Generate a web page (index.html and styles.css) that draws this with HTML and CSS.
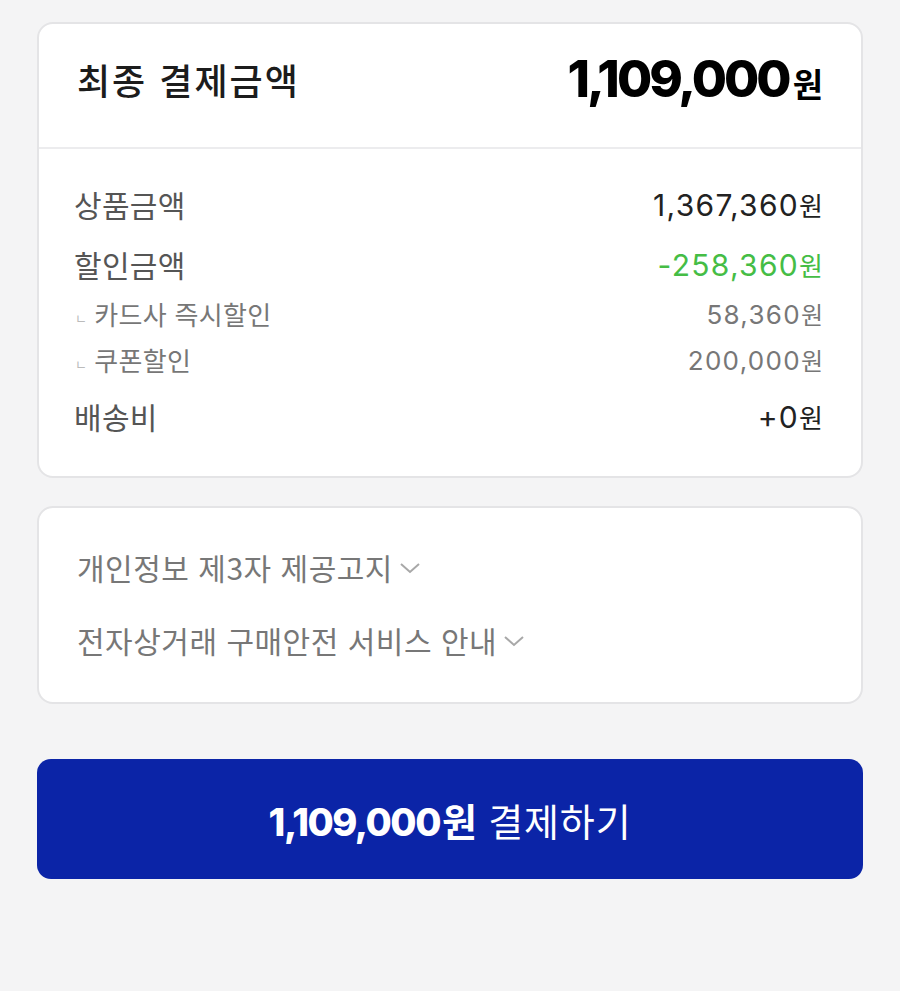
FILE: index.html
```html
<!DOCTYPE html>
<html lang="ko">
<head>
    <meta charset="UTF-8">
    <meta name="viewport" content="width=device-width, initial-scale=1.0">
    <title>결제하기</title>
    <link rel="stylesheet" href="styles.css">
</head>
<body>

<div class="page">
    <div class="card summary">
        <div class="summary-head">
            <span class="head-label">최종 결제금액</span>
            <span class="head-price">1,109,000<small>원</small></span>
        </div>
        <div class="summary-body">
            <div class="row">
                <span class="label">상품금액</span>
                <span class="value">1,367,360<small>원</small></span>
            </div>
            <div class="row">
                <span class="label">할인금액</span>
                <span class="value green">-258,360<small>원</small></span>
            </div>
            <div class="row sub">
                <span class="label"><i class="mark">ㄴ</i>카드사 즉시할인</span>
                <span class="value">58,360<small>원</small></span>
            </div>
            <div class="row sub">
                <span class="label"><i class="mark">ㄴ</i>쿠폰할인</span>
                <span class="value">200,000<small>원</small></span>
            </div>
            <div class="row last">
                <span class="label">배송비</span>
                <span class="value">+0<small>원</small></span>
            </div>
        </div>
    </div>

    <div class="card notice">
        <div class="notice-item">개인정보 제3자 제공고지
            <svg class="chev" width="22" height="12" viewBox="0 0 22 12"><path d="M2 2l9 8 9-8" fill="none" stroke="#a8a8a8" stroke-width="2"/></svg>
        </div>
        <div class="notice-item">전자상거래 구매안전 서비스 안내
            <svg class="chev" width="22" height="12" viewBox="0 0 22 12"><path d="M2 2l9 8 9-8" fill="none" stroke="#a8a8a8" stroke-width="2"/></svg>
        </div>
    </div>

    <button class="pay-btn"><b>1,109,000<span>원</span></b> 결제하기</button>
</div>

</body>
</html>
```

FILE: styles.css
```css
body {
    margin: 0;
    background-color: #f4f4f5;
    font-family: "Noto Sans CJK KR", "Noto Sans", sans-serif;
    color: #222;
}

.page {
    padding: 22px 37px 0 37px;
    display: flex;
    flex-direction: column;
}

.card {
    background-color: #fff;
    border: 2px solid #e4e4e6;
    border-radius: 16px;
}

.summary-head {
    height: 125px;
    padding: 0 38px 14px 38px;
    box-sizing: border-box;
    display: flex;
    justify-content: space-between;
    align-items: center;
    border-bottom: 2px solid #ececee;
}

.head-label {
    font-size: 36px;
    font-weight: 500;
    color: #1c1c1c;
    letter-spacing: 2px;
}

.head-price {
    font-family: "Inter", "Noto Sans CJK KR", sans-serif;
    font-size: 51px;
    font-weight: 800;
    color: #000;
    letter-spacing: -3px;
}

.head-price small {
    font-family: "Noto Sans CJK KR", sans-serif;
    font-size: 33px;
    font-weight: 700;
    letter-spacing: 0;
    margin-left: 4px;
}

.summary-body {
    padding: 35px 38px 40px 35px;
}

.row {
    display: flex;
    justify-content: space-between;
    align-items: center;
    height: 40px;
    margin-bottom: 20px;
}

.row .label {
    font-size: 30px;
    color: #555;
    letter-spacing: 0.3px;
}

.row .value {
    font-family: "Inter", "Noto Sans CJK KR", sans-serif;
    font-size: 30px;
    color: #222;
    letter-spacing: 1.3px;
}

.row small {
    font-family: "Noto Sans CJK KR", sans-serif;
    font-size: 26px;
    letter-spacing: 0;
}

.row .green {
    color: #45bd45;
}

.row.sub {
    height: 36px;
    margin-top: -9px;
    margin-bottom: 19px;
}

.row.sub .label {
    font-size: 26px;
    color: #777;
}

.row.sub .value {
    font-size: 26px;
    color: #777;
    letter-spacing: 1.3px;
}

.row.sub small {
    font-size: 24px;
}

.row.sub + .row.sub {
    margin-top: -9px;
}

.row.last {
    margin-top: 2px;
    margin-bottom: 0;
}

.mark {
    font-style: normal;
    font-size: 13px;
    color: #bbb;
    margin: 0 7px 0 1px;
    vertical-align: 2px;
}

.notice {
    margin-top: 28px;
    padding: 37px 38px 40px 38px;
}

.notice-item {
    font-size: 30px;
    color: #777;
    letter-spacing: 0.5px;
    height: 44px;
    display: flex;
    align-items: center;
    gap: 6px;
}

.notice-item + .notice-item {
    margin-top: 29px;
}

.chev {
    margin-top: 2px;
}

.pay-btn {
    margin-top: 55px;
    height: 120px;
    border: none;
    border-radius: 14px;
    background-color: #0b24a7;
    color: #fff;
    font-family: inherit;
    font-size: 38px;
    letter-spacing: 0.8px;
    cursor: pointer;
}

.pay-btn b {
    font-family: "Inter", "Noto Sans CJK KR", sans-serif;
    font-weight: 800;
    letter-spacing: -1.5px;
}

.pay-btn b span {
    font-family: "Noto Sans CJK KR", sans-serif;
    font-weight: 700;
    letter-spacing: 0;
    margin-left: 2px;
}
```
